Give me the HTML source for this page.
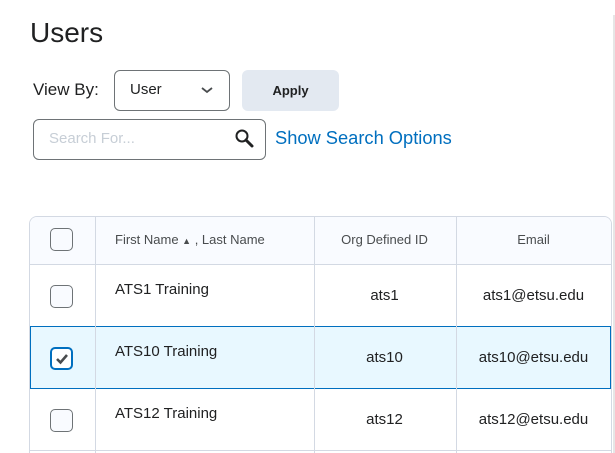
<!DOCTYPE html>
<html style="width:615px;height:453px;overflow:hidden"><head><meta charset="utf-8"><style>
*{box-sizing:border-box;margin:0;padding:0}
body{width:615px;height:453px;background:#fff;font-family:"Liberation Sans",sans-serif;color:#202122;position:relative;overflow:hidden}
.a{position:absolute}
.cb{position:absolute;width:23px;height:23px;border:1px solid #6e7376;border-radius:5px;background:#f9fbff}
.t{position:absolute;font-size:15px;color:#202122}
.h{position:absolute;font-size:13px;color:#494c4e}
</style></head><body>
<div class="a" style="left:30px;top:17px;font-size:28px;color:#202122">Users</div>
<div class="a" style="left:33px;top:80px;font-size:17px;color:#202122">View By:</div>
<div class="a" style="left:114px;top:70px;width:116px;height:41px;border:1px solid #6e7376;border-radius:6px"></div>
<div class="a" style="left:130px;top:81px;font-size:15px">User</div>
<svg class="a" style="left:200px;top:85px" width="14" height="10"><path d="M2 3l5 4 5-4" stroke="#494c4e" stroke-width="1.8" fill="none"/></svg>
<div class="a" style="left:242px;top:70px;width:97px;height:41px;background:#e3e9f1;border-radius:6px;font-size:13px;font-weight:bold;text-align:center;line-height:41px;color:#202122">Apply</div>
<div class="a" style="left:33px;top:119px;width:233px;height:41px;border:1px solid #6e7376;border-radius:6px"></div>
<div class="a" style="left:49px;top:130px;font-size:15px;color:#c7ced6">Search For...</div>
<svg class="a" style="left:234px;top:128px" width="22" height="22"><circle cx="8" cy="8" r="5.5" stroke="#202122" stroke-width="2" fill="none"/><path d="M12 12l6 6" stroke="#202122" stroke-width="3" stroke-linecap="round"/></svg>
<div class="a" style="left:275px;top:127px;font-size:18.3px;color:#006fbf">Show Search Options</div>
<div class="a" style="left:613px;top:15px;width:2px;height:438px;background:#e6e6e6"></div>

<div class="a" style="left:29px;top:216px;width:583px;height:237px;border:1px solid #d3d9e3;border-bottom:none;border-radius:8px 8px 0 0;overflow:hidden">
 <div class="a" style="left:0;top:0;width:583px;height:48px;background:#f9fbff;border-bottom:1px solid #d3d9e3"></div>
 <div class="a" style="left:0;top:109px;width:581px;height:63px;background:#e8f8ff;border:1px solid #006fbf"></div>
 <div class="a" style="left:0;top:233px;width:583px;height:1px;background:#d3d9e3"></div>
 <div class="a" style="left:65px;top:0;width:1px;height:250px;background:#d3d9e3"></div>
 <div class="a" style="left:284px;top:0;width:1px;height:250px;background:#d3d9e3"></div>
 <div class="a" style="left:426px;top:0;width:1px;height:250px;background:#d3d9e3"></div>
</div>
<div class="cb" style="left:50px;top:228px"></div>
<div class="cb" style="left:50px;top:285px"></div>
<div class="cb" style="left:50px;top:347px;border:2px solid #006fbf;background:#fff"></div>
<svg class="a" style="left:54px;top:351px" width="16" height="16"><path d="M3 8l3.5 3.5L13 4" stroke="#494c4e" stroke-width="2.6" fill="none"/></svg>
<div class="cb" style="left:50px;top:409px"></div>

<div class="h" style="left:115px;top:232px">First Name <span style="font-size:9px">&#9650;</span> , Last Name</div>
<div class="h" style="left:313px;top:232px;width:143px;text-align:center">Org Defined ID</div>
<div class="h" style="left:456px;top:232px;width:155px;text-align:center">Email</div>

<div class="t" style="left:115px;top:281px">ATS1 Training</div>
<div class="t" style="left:313px;top:287px;width:143px;text-align:center">ats1</div>
<div class="t" style="left:456px;top:287px;width:155px;text-align:center">ats1@etsu.edu</div>
<div class="t" style="left:115px;top:343px">ATS10 Training</div>
<div class="t" style="left:313px;top:349px;width:143px;text-align:center">ats10</div>
<div class="t" style="left:456px;top:349px;width:155px;text-align:center">ats10@etsu.edu</div>
<div class="t" style="left:115px;top:405px">ATS12 Training</div>
<div class="t" style="left:313px;top:411px;width:143px;text-align:center">ats12</div>
<div class="t" style="left:456px;top:411px;width:155px;text-align:center">ats12@etsu.edu</div>
</body></html>
